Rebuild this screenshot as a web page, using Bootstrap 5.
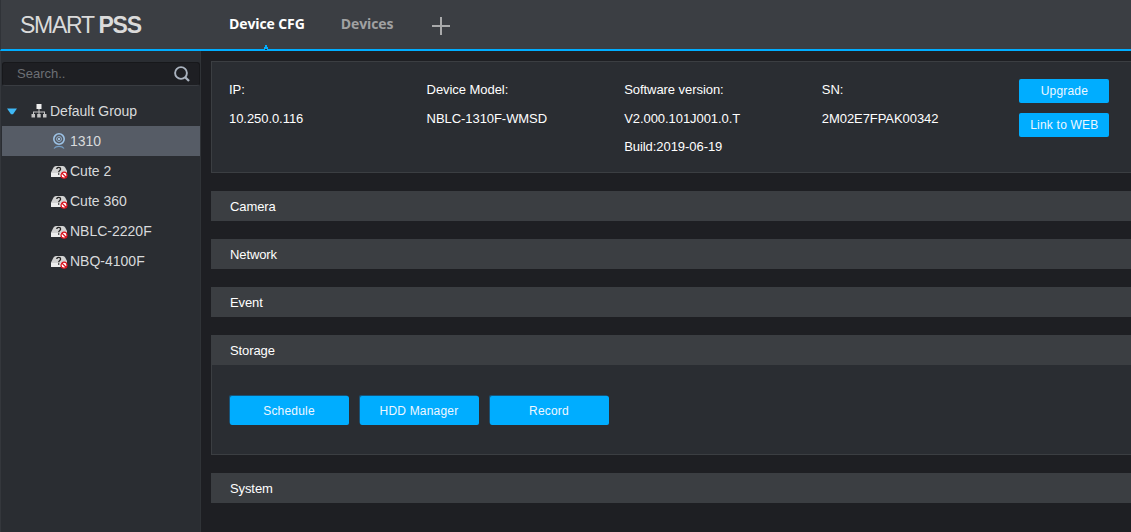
<!DOCTYPE html>
<html lang="en">
<head>
<meta charset="utf-8">
<meta name="viewport" content="width=device-width, initial-scale=1">
<title>SMART PSS</title>
<link href="https://cdn.jsdelivr.net/npm/bootstrap@5.3.0/dist/css/bootstrap.min.css" rel="stylesheet">
<style>
  body { height: 532px; background: #1e1f23; color: #fff; font: 13px/20px "Liberation Sans", Arial, sans-serif; }
  .topbar { height: 51px; padding: 0; background: #3b3e43; border-bottom: 2px solid #00adff; border-left: 1px solid #303338; flex-wrap: nowrap; align-items: stretch; justify-content: flex-start; }
  .brand { width: 228px; padding: 10px 0 0 19px; font-size: 23px; line-height: 30px; letter-spacing: -1.25px; white-space: nowrap; color: #dadada; }
  .brand b { letter-spacing: -1.3px; }
  .tab { position: relative; padding: 14px 0 0; font: 700 14px/20px "Open Sans", sans-serif; letter-spacing: -.1px; color: #a0a1a2; margin-right: 36px; white-space: nowrap; }
  .tab.active { color: #fff; }
  .tab .notch { position: absolute; left: 34px; bottom: -1px; }
  .plus { margin-top: 17px; margin-left: 3px; }
  .sidebar { width: 201px; background: #2a2d32; border-left: 1px solid #34373c; border-right: 1px solid #303337; }
  .search { height: 24px; margin: 11px 0 10px 1px; padding: 0 9px 0 14px; background: #1e1f23; border: 1px solid #17181b; border-bottom-color: #393c41; border-radius: 3px; color: #6d7075; }
  .tree { font-size: 14px; line-height: 30px; color: #d8dadc; }
  .tree li { height: 30px; padding-left: 49px; margin-left: 1px; white-space: nowrap; }
  .tree li.group { padding-left: 5px; }
  .tree li.active { background: #565c66; }
  .tree svg { flex: none; }
  .tree .org { margin: 0 3px 0 14px; }
  .tree .dev { margin-right: 2px; }
  .tree .cam { margin: 0 4px 0 1px; }
  .main { padding: 10px 0 0 10px; min-width: 0; }
  .info { height: 112px; padding: 17px 0 0 17px; margin-bottom: 18px; background: #2a2d32; border: 1px solid #3b3e42; border-right: 0; }
  .field { width: 197.6px; flex: none; white-space: nowrap; padding-top: 1px; letter-spacing: -.06px; }
  .field dt { font-weight: 400; line-height: 20px; margin-bottom: 9px; }
  .field dd { margin: 0 0 8px; line-height: 20px; }
  .sect { height: 30px; padding-left: 19px; line-height: 31px; letter-spacing: -.1px; background: #3b3e42; margin-bottom: 18px; }
  .sect.open { margin-bottom: 0; }
  .panel { height: 90px; padding: 31px 0 0 18px; margin-bottom: 18px; gap: 11px; background: #2a2d32; border: 1px solid #3b3e42; border-width: 0 0 1px 1px; }
  .btn-pss { --bs-btn-color: #eef7ff; --bs-btn-bg: #00adff; --bs-btn-border-width: 0; --bs-btn-border-radius: 2px; --bs-btn-padding-x: 0; --bs-btn-padding-y: 0; --bs-btn-font-size: 12px; --bs-btn-hover-bg: #1bb6ff; --bs-btn-hover-color: #fff; letter-spacing: .2px; }
  .side-actions { gap: 10px; }
  .side-actions .btn { width: 90px; height: 24px; line-height: 25px; }
  .panel .btn { width: 119px; height: 29px; line-height: 30px; box-shadow: -1px -1px 0 #17547a; padding-right: 1px; }
</style>
</head>
<body class="d-flex flex-column overflow-hidden">
<svg class="d-none">
  <symbol id="offline" viewBox="0 0 17 15">
    <path d="M0 13V8.500L2.500 3.500Q3.300 2 5 2h7q1.500 0 2.200 1.500L16 7v6Z" fill="#d2d2d2"/>
    <path d="M0 9h16v4H0Z" fill="#ededed"/>
    <path d="M5.800 5Q5.800 3.400 7.700 3.400T9.600 5Q9.600 6 8.500 6.700Q7.700 7.200 7.700 8.300M7.700 9.300v1.400" fill="none" stroke="#222" stroke-width="1.300"/>
    <circle cx="13" cy="11.200" r="3" fill="#fff" stroke="#d9101c" stroke-width="1.200"/>
    <path d="M10.900 9.100l4.200 4.200" stroke="#d9101c" stroke-width="1.300"/>
  </symbol>
</svg>
<header class="navbar topbar flex-shrink-0">
  <div class="brand">SMART <b>PSS</b></div>
  <a class="tab active text-decoration-none" href="#">Device CFG
    <svg class="notch" width="6" height="5" viewBox="0 0 6 5" shape-rendering="crispEdges"><path d="M2 0h2v2h1v3H1V2h1Z" fill="#00adff"/><path d="M2 4h2v1H2Z" fill="#24313a"/></svg>
  </a>
  <a class="tab text-decoration-none" href="#">Devices</a>
  <svg class="plus" width="18" height="18" viewBox="0 0 18 18"><path d="M9 0v18M0 9h18" stroke="#a9aaab" stroke-width="2"/></svg>
</header>
<div class="d-flex flex-grow-1">
  <aside class="sidebar flex-shrink-0">
    <div class="search d-flex align-items-center justify-content-between">
      <span>Search..</span>
      <svg width="16" height="16" viewBox="0 0 16 16" fill="none" stroke="#aab3bf"><circle cx="7" cy="7" r="5.900" stroke-width="1.900"/><path d="M11.200 11.200L15 15" stroke-width="2.300"/></svg>
    </div>
    <ul class="tree list-unstyled mb-0">
      <li class="group d-flex align-items-center">
        <svg width="10" height="7" viewBox="0 0 10 7"><path d="M0 .5h10L6 6.200H4Z" fill="#3fb8f5"/></svg>
        <svg class="org" width="16" height="14" viewBox="0 0 16 14" fill="#c4c4c4"><path d="M5.500 0h5v5h-5Z" fill="#eee"/><path d="M7.500 5h1v2.500h5.500V10h-1V8.500h-4.500V10h-1V8.500H3V10H2V7.500h5.500Z"/><path d="M.5 10h3.500v3.500H.5ZM6.200 10h3.500v3.500H6.200ZM12 10h3.500v3.500H12Z"/></svg>
        <span>Default Group</span>
      </li>
      <li class="active d-flex align-items-center">
        <svg class="cam" width="14" height="18" viewBox="0 0 14 18" fill="none" stroke="#9dc3e6"><circle cx="7" cy="7" r="5.200" stroke-width="1.600"/><circle cx="7" cy="7" r="2.500" stroke-width=".8"/><circle cx="7" cy="7" r="1.100" fill="#b8d8f2" stroke="none"/><path d="M2 16.500Q3.500 14.300 7 14.300T12 16.500" stroke="#739cc2" stroke-width="1.200"/></svg>
        <span>1310</span>
      </li>
      <li class="d-flex align-items-center"><svg class="dev" width="17" height="15"><use href="#offline"/></svg><span>Cute 2</span></li>
      <li class="d-flex align-items-center"><svg class="dev" width="17" height="15"><use href="#offline"/></svg><span>Cute 360</span></li>
      <li class="d-flex align-items-center"><svg class="dev" width="17" height="15"><use href="#offline"/></svg><span>NBLC-2220F</span></li>
      <li class="d-flex align-items-center"><svg class="dev" width="17" height="15"><use href="#offline"/></svg><span>NBQ-4100F</span></li>
    </ul>
  </aside>
  <main class="main flex-grow-1">
    <section class="info d-flex">
      <dl class="field mb-0"><dt>IP:</dt><dd>10.250.0.116</dd></dl>
      <dl class="field mb-0"><dt>Device Model:</dt><dd>NBLC-1310F-WMSD</dd></dl>
      <dl class="field mb-0"><dt>Software version:</dt><dd>V2.000.101J001.0.T</dd><dd>Build:2019-06-19</dd></dl>
      <dl class="field mb-0"><dt>SN:</dt><dd>2M02E7FPAK00342</dd></dl>
      <div class="side-actions d-flex flex-column">
        <button class="btn btn-pss">Upgrade</button>
        <button class="btn btn-pss">Link to WEB</button>
      </div>
    </section>
    <div class="sect">Camera</div>
    <div class="sect">Network</div>
    <div class="sect">Event</div>
    <div class="sect open">Storage</div>
    <div class="panel d-flex align-items-start">
      <button class="btn btn-pss">Schedule</button>
      <button class="btn btn-pss">HDD Manager</button>
      <button class="btn btn-pss">Record</button>
    </div>
    <div class="sect">System</div>
  </main>
</div>
<script src="https://cdn.jsdelivr.net/npm/bootstrap@5.3.0/dist/js/bootstrap.bundle.min.js"></script>
</body>
</html>
